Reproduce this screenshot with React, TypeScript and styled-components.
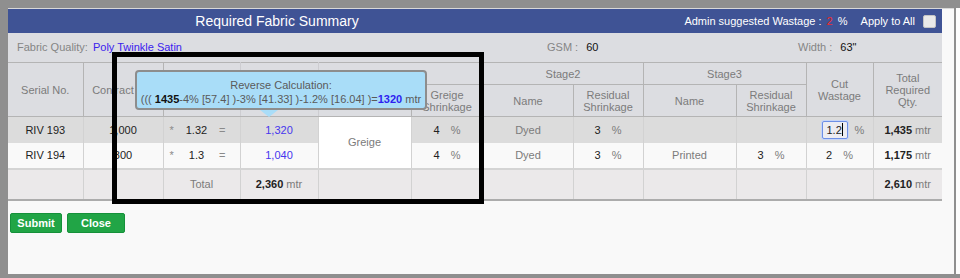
import React from "react";
import styled, { createGlobalStyle } from "styled-components";

const GlobalStyle = createGlobalStyle`
  html, body { margin: 0; padding: 0; }
  body {
    background: #8f8f8f;
    font-family: Arial, "Liberation Sans", sans-serif;
    font-size: 11px;
  }
`;

type Row = {
  serial: string;
  contract: string;
  factor: string;
  required: string;
  greige: string;
  stage2: string;
  stage2Res: string;
  stage3: string;
  stage3Res: string;
  cut: string;
  total: string;
  editing?: boolean;
};

const rows: Row[] = [
  {
    serial: "RIV 193",
    contract: "1,000",
    factor: "1.32",
    required: "1,320",
    greige: "4",
    stage2: "Dyed",
    stage2Res: "3",
    stage3: "",
    stage3Res: "",
    cut: "1.2",
    total: "1,435",
    editing: true
  },
  {
    serial: "RIV 194",
    contract: "800",
    factor: "1.3",
    required: "1,040",
    greige: "4",
    stage2: "Dyed",
    stage2Res: "3",
    stage3: "Printed",
    stage3Res: "3",
    cut: "2",
    total: "1,175"
  }
];

const colWidths = [75, 80, 77, 78, 93, 72, 90, 70, 93, 70, 67, 69];

const Percent = ({ value, input }: { value: string; input?: boolean }) =>
  value ? (
    <StPct>
      {input ? (
        <StInput>
          {value}
          <StCaret />
        </StInput>
      ) : (
        <span>{value}</span>
      )}
      <StUnit>%</StUnit>
    </StPct>
  ) : (
    <>{"\u00a0"}</>
  );

export default function App() {
  return (
    <>
      <GlobalStyle />
      <StFrame>
        <StPanel>
          <StTitleBar>
            <StTitle>Required Fabric Summary</StTitle>
            <StTitleRight>
              <span>
                Admin suggested Wastage : <StRed>2</StRed> %
              </span>
              <StApply>Apply to All</StApply>
              <StCheck />
            </StTitleRight>
          </StTitleBar>

          <StInfo>
            <div>
              <StLabel>Fabric Quality:</StLabel>
              <StQuality>Poly Twinkle Satin</StQuality>
            </div>
            <div>
              <StLabel>GSM : </StLabel>
              <StValue>60</StValue>
            </div>
            <div>
              <StLabel>Width : </StLabel>
              <StValue>63"</StValue>
            </div>
          </StInfo>

          <StTable>
            <colgroup>
              {colWidths.map((w, i) => (
                <col key={i} style={{ width: w }} />
              ))}
            </colgroup>
            <thead>
              <tr>
                <StTh rowSpan={2}>Serial No.</StTh>
                <StTh rowSpan={2}>Contract Qty</StTh>
                <StTh rowSpan={2} $faint />
                <StTh rowSpan={2} $faint />
                <StTh colSpan={2}>Stage1</StTh>
                <StTh colSpan={2}>Stage2</StTh>
                <StTh colSpan={2}>Stage3</StTh>
                <StTh rowSpan={2}>Cut Wastage</StTh>
                <StTh rowSpan={2}>Total Required Qty.</StTh>
              </tr>
              <tr>
                <StTh>Name</StTh>
                <StTh>Greige Shrinkage</StTh>
                <StTh>Name</StTh>
                <StTh>Residual Shrinkage</StTh>
                <StTh>Name</StTh>
                <StTh>Residual Shrinkage</StTh>
              </tr>
            </thead>
            <tbody>
              {rows.map((r, i) => (
                <StRow key={r.serial} $shade={i === 0}>
                  <StTd>{r.serial}</StTd>
                  <StTd>{r.contract}</StTd>
                  <StTd>
                    <StMult>
                      <StSign>*</StSign>
                      <StFactor>{r.factor}</StFactor>
                      <StSign>=</StSign>
                    </StMult>
                  </StTd>
                  <StTd>
                    <StBlue>{r.required}</StBlue>
                  </StTd>
                  {i === 0 && <StGreige rowSpan={2}>Greige</StGreige>}
                  <StTd>
                    <Percent value={r.greige} />
                  </StTd>
                  <StTd>
                    <StName>{r.stage2}</StName>
                  </StTd>
                  <StTd>
                    <Percent value={r.stage2Res} />
                  </StTd>
                  <StTd>
                    <StName>{r.stage3 || "\u00a0"}</StName>
                  </StTd>
                  <StTd>
                    <Percent value={r.stage3Res} />
                  </StTd>
                  <StTd>
                    <Percent value={r.cut} input={r.editing} />
                  </StTd>
                  <StTd>
                    <b>{r.total}</b> <StName>mtr</StName>
                  </StTd>
                </StRow>
              ))}
              <StTotalRow>
                <StTd />
                <StTd />
                <StTd>
                  <StName>Total</StName>
                </StTd>
                <StTd>
                  <b>2,360</b> <StName>mtr</StName>
                </StTd>
                <StTd />
                <StTd />
                <StTd />
                <StTd />
                <StTd />
                <StTd />
                <StTd />
                <StTd>
                  <b>2,610</b> <StName>mtr</StName>
                </StTd>
              </StTotalRow>
            </tbody>
          </StTable>

          <StActions>
            <StButton $w={52}>Submit</StButton>
            <StButton $w={58}>Close</StButton>
          </StActions>

          <StTip>
            <div>Reverse Calculation:</div>
            <div>
              ((( <StTipStrong>1435</StTipStrong>-4% [57.4] )-3% [41.33] )-1.2% [16.04] )=
              <StTipResult>1320</StTipResult> mtr
            </div>
          </StTip>
          <StMarker />
        </StPanel>
        <StGutter />
      </StFrame>
    </>
  );
}

const StFrame = styled.div`
  display: flex;
  height: 278px;
  padding: 8px 0 4px 8px;
  box-sizing: border-box;
`;

const StPanel = styled.div`
  position: relative;
  width: 946px;
  padding-right: 12px;
  box-sizing: border-box;
  background: #f9f9f9;
  border-top: 1px solid #d8d8d8;
`;

const StGutter = styled.div`
  flex: 1;
  margin-left: 2px;
  background: #fdfdfd;
`;

const StTitleBar = styled.div`
  display: flex;
  align-items: center;
  height: 24px;
  background: #3f5395;
  color: #fff;
`;

const StTitle = styled.div`
  width: 538px;
  text-align: center;
  font-size: 14px;
`;

const StTitleRight = styled.div`
  flex: 1;
  display: flex;
  align-items: center;
  justify-content: flex-end;
  padding-right: 6px;
  font-size: 11px;
`;

const StRed = styled.span`
  color: #f02a2a;
  margin: 0 2px;
`;

const StApply = styled.span`
  margin-left: 13px;
`;

const StCheck = styled.span`
  width: 11px;
  height: 11px;
  margin-left: 8px;
  background: #e9e9e9;
  border: 1px solid #c4c4c4;
  border-radius: 2px;
`;

const StInfo = styled.div`
  display: grid;
  grid-template-columns: 530px 251px 1fr;
  height: 29px;
  padding: 7px 0 0 9px;
  box-sizing: border-box;
  background: #dcdde1;
  line-height: 14px;
`;

const StLabel = styled.span`
  color: #858585;
  margin-right: 5px;
`;

const StQuality = styled.span`
  color: #3a22ee;
`;

const StValue = styled.span`
  color: #111;
`;

const StTable = styled.table`
  width: 934px;
  border-collapse: collapse;
  table-layout: fixed;
  border-bottom: 2px solid #acacac;
`;

const StTh = styled.th<{ $faint?: boolean }>`
  padding: 0 4px;
  background: #dcdde1;
  color: #7b7b7b;
  font-weight: normal;
  line-height: 12px;
  border: 1px solid #b4b4b4;
  border-left-color: ${p => (p.$faint ? "#cdcdd1" : "#b4b4b4")};
  border-right-color: ${p => (p.$faint ? "#cdcdd1" : "#b4b4b4")};
  tr:first-child > & {
    height: 21px;
  }
  tr:nth-child(2) > & {
    height: 31px;
  }
  &:first-child {
    border-left: none;
  }
  &:last-child {
    border-right: none;
  }
`;

const StRow = styled.tr<{ $shade?: boolean }>`
  height: 26px;
  background: ${p => (p.$shade ? "#dcdcdc" : "#f9f9f9")};
  & > td {
    background: ${p => (p.$shade ? "#dcdcdc" : "#f9f9f9")};
  }
`;

const StTotalRow = styled.tr`
  height: 31px;
  border-top: 2px solid #d4d4d4;
  background: #ebe9ea;
  & > td {
    background: #ebe9ea;
  }
`;

const StTd = styled.td`
  padding: 0;
  text-align: center;
  color: #222;
  border-left: 1px solid #d2d2d2;
  border-right: 1px solid #d2d2d2;
  &:first-child {
    border-left: none;
  }
  &:last-child {
    border-right: none;
  }
`;

const StGreige = styled.td`
  && {
    background: #fff;
  }
  color: #7b7b7b;
  text-align: center;
  border-left: 1px solid #d2d2d2;
  border-right: 1px solid #d2d2d2;
`;

const StMult = styled.div`
  display: flex;
  align-items: center;
  padding: 0 14px 0 6px;
`;

const StSign = styled.span`
  color: #8a8a8a;
`;

const StFactor = styled.span`
  flex: 1;
  text-align: center;
`;

const StBlue = styled.span`
  color: #4636ee;
`;

const StName = styled.span`
  color: #7b7b7b;
`;

const StPct = styled.div`
  display: flex;
  justify-content: center;
  align-items: center;
  gap: 11px;
`;

const StUnit = styled.span`
  color: #7b7b7b;
`;

const StInput = styled.span`
  display: inline-flex;
  align-items: center;
  justify-content: center;
  width: 24px;
  height: 16px;
  margin-left: 7px;
  margin-right: -4px;
  border: 1px solid #6d8fe6;
  border-radius: 2px;
  background: #ececf2;
  box-shadow: 0 0 0 1px #c5d4f7;
`;

const StCaret = styled.span`
  width: 1px;
  height: 13px;
  background: #000;
`;

const StActions = styled.div`
  display: flex;
  gap: 5px;
  margin-top: 12px;
  padding-left: 2px;
`;

const StButton = styled.button<{ $w: number }>`
  width: ${p => p.$w}px;
  height: 20px;
  padding: 0;
  background: #21a546;
  border: 1px solid #15913a;
  border-radius: 2px;
  color: #fff;
  font-family: Arial, "Liberation Sans", sans-serif;
  font-size: 11px;
  font-weight: bold;
`;

const StTip = styled.div`
  position: absolute;
  left: 127px;
  top: 61px;
  width: 292px;
  height: 40px;
  box-sizing: border-box;
  padding-top: 6px;
  background: #a9ddf8;
  border: 2px solid #8d8d8d;
  border-radius: 4px;
  color: #5a5a5a;
  text-align: center;
  line-height: 14px;
  white-space: nowrap;
  &::after {
    content: "";
    position: absolute;
    left: 123px;
    bottom: -9px;
    border-left: 9px solid transparent;
    border-right: 9px solid transparent;
    border-top: 7px solid #a9ddf8;
  }
`;

const StTipStrong = styled.b`
  color: #111;
`;

const StTipResult = styled.b`
  color: #2d1ff0;
`;

const StMarker = styled.div`
  position: absolute;
  left: 104px;
  top: 43px;
  width: 372px;
  height: 152px;
  box-sizing: border-box;
  border: 5px solid #000;
  pointer-events: none;
`;
